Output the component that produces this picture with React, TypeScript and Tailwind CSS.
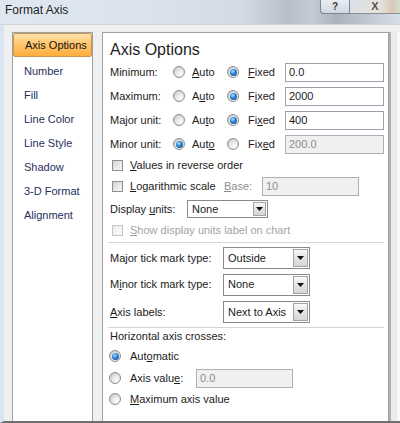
import React from "react";

function Radio({ checked = false }: { checked?: boolean }) {
  return (
    <span className="relative flex w-[12px] h-[12px] shrink-0 items-center justify-center rounded-full border border-[#8e8e8e] bg-[radial-gradient(circle_at_65%_70%,#ffffff_0%,#e6e6e6_45%,#bdbdbd_100%)]">
      {checked && (
        <span className="block w-[7px] h-[7px] rounded-full bg-[radial-gradient(circle_at_40%_35%,#a8e0ff_0%,#2b7fd0_45%,#0b3f7c_100%)]" />
      )}
    </span>
  );
}

function Check({ disabled = false }: { disabled?: boolean }) {
  return (
    <span
      className={
        disabled
          ? "block w-[11px] h-[11px] shrink-0 border border-[#c4c4c4] bg-[linear-gradient(135deg,#ececec,#fbfbfb)]"
          : "block w-[11px] h-[11px] shrink-0 border border-[#8e8f8f] bg-[linear-gradient(135deg,#d4d4d4,#f8f8f8)]"
      }
    />
  );
}

function Input({ value, disabled = false, w }: { value: string; disabled?: boolean; w: string }) {
  return (
    <div
      className={
        (disabled
          ? "bg-[#f0f0f0] text-[#8d8d8d] border-[#a9b0b7] "
          : "bg-white text-[#1b1b1b] border-[#9aa1a8] ") +
        "h-[19px] border flex items-center pl-[3px] text-[11px] leading-none " +
        w
      }
    >
      {value}
    </div>
  );
}

function Arrow({ small = false }: { small?: boolean }) {
  return (
    <span
      className={
        (small ? "w-[13px] h-[14px] " : "w-[15px] h-[18px] ") +
        "flex items-center justify-center border border-[#a3a3a3] bg-[linear-gradient(#f9f9f9,#e3e3e3_50%,#d6d6d6)]"
      }
    >
      <svg width="7" height="4" viewBox="0 0 7 4">
        <path d="M0 0 H7 L3.5 4 Z" fill="#111" />
      </svg>
    </span>
  );
}

function Select({ value, w, h, small = false }: { value: string; w: string; h: string; small?: boolean }) {
  return (
    <div className={"flex items-center border border-[#8a8a8a] bg-white pl-[4px] pr-[1px] " + w + " " + h}>
      <span className="flex-1 text-[11px] text-[#1b1b1b] whitespace-nowrap">{value}</span>
      <Arrow small={small} />
    </div>
  );
}

const navItems = ["Number", "Fill", "Line Color", "Line Style", "Shadow", "3-D Format", "Alignment"];

export default function App() {
  return (
    <div className="w-[400px] h-[423px] overflow-hidden flex flex-col font-['Liberation_Sans',Arial,sans-serif] text-[11px] text-[#1b1b1b] bg-[#f0f0f0]">
      {/* Title bar */}
      <div className="h-[25px] flex items-start bg-[linear-gradient(90deg,#dfe8f1_0%,#dbe4ee_35%,#d3dce6_60%,#b7c0ca_72%,#c2cbd4_78%,#aab3bd_84%,#d6dee6_100%)] border-b border-[#cfd6de]">
        <div className="flex-1 pl-[5px] pt-[3px] text-[12px] leading-[14px] text-[#1e1e1e]">Format Axis</div>
        <div className="flex">
          <div className="w-[30px] h-[14px] flex items-center justify-center border border-t-0 border-[#7d8894] rounded-bl-[4px] bg-[linear-gradient(#e9eef3,#cfd8e1)] text-[10px] font-bold text-[#3a3a3a] leading-none">
            ?
          </div>
          <div className="w-[50px] h-[14px] flex items-center justify-center border-b border-[#8a8f95] bg-[linear-gradient(90deg,#d9e0e7,#e8e2dc_60%,#d8c8b8_85%,#cfe0c9)] text-[11px] font-bold text-[#555] leading-none">
            X
          </div>
        </div>
      </div>

      {/* Body */}
      <div className="flex-1 flex border-l-[4px] border-l-[#d9e5f2] border-b-2 border-b-[#6e6e6e] pl-[8px] pt-[7px]">
        {/* Left nav */}
        <div className="w-[81px] border border-b-0 border-[#a0a0a0] bg-white flex flex-col">
          <div className="h-[24px] flex items-center pl-[11px] border border-[#c9964f] rounded-[2px] bg-[linear-gradient(#ffe2ad_0%,#ffc66e_45%,#ffae3d_100%)] text-[#111]">
            Axis Options
          </div>
          <div className="mt-[2px] flex flex-col">
            {navItems.map((n) => (
              <div key={n} className="h-[24px] flex items-center pl-[11px] text-[#1f2f5c]">
                {n}
              </div>
            ))}
          </div>
        </div>

        {/* Right panel */}
        <div className="ml-[9px] w-[287px] border border-b-0 border-[#a0a0a0] bg-white flex flex-col pl-[7px]">
          <div className="h-[27px] pt-[7px] text-[16px] leading-[19px] text-[#1e1e1e]">Axis Options</div>

          {[
            { label: "Minimum:", auto: false, a: ["", "A", "uto"], f: ["", "F", "ixed"], val: "0.0" },
            { label: "Maximum:", auto: false, a: ["A", "u", "to"], f: ["F", "i", "xed"], val: "2000" },
            { label: "Major unit:", auto: false, a: ["Au", "t", "o"], f: ["Fi", "x", "ed"], val: "400" },
            { label: "Minor unit:", auto: true, a: ["Aut", "o", ""], f: ["Fix", "e", "d"], val: "200.0" },
          ].map((r) => (
            <div key={r.label} className="h-[24px] flex items-center">
              <span className="w-[63px] whitespace-nowrap">{r.label}</span>
              <Radio checked={r.auto} />
              <span className="ml-[7px] w-[35px]">
                {r.a[0]}
                <u>{r.a[1]}</u>
                {r.a[2]}
              </span>
              <Radio checked={!r.auto} />
              <span className="ml-[9px] w-[37px]">
                {r.f[0]}
                <u>{r.f[1]}</u>
                {r.f[2]}
              </span>
              <Input value={r.val} disabled={r.auto} w="w-[99px]" />
            </div>
          ))}

          <div className="h-[18px] flex items-center">
            <span className="ml-[2px]">
              <Check />
            </span>
            <span className="ml-[7px]">
              <u>V</u>alues in reverse order
            </span>
          </div>

          <div className="h-[24px] flex items-center">
            <span className="ml-[2px]">
              <Check />
            </span>
            <span className="ml-[7px] w-[94px] whitespace-nowrap">
              <u>L</u>ogarithmic scale
            </span>
            <span className="w-[38px] text-[#8d8d8d]">
              <u>B</u>ase:
            </span>
            <Input value="10" disabled w="w-[97px]" />
          </div>

          <div className="h-[22px] flex items-center">
            <span className="w-[77px] whitespace-nowrap">
              Display <u>u</u>nits:
            </span>
            <Select value="None" w="w-[81px]" h="h-[18px]" small />
          </div>

          <div className="h-[21px] flex items-center text-[#a3a3a3]">
            <span className="ml-[2px]">
              <Check disabled />
            </span>
            <span className="ml-[7px]">
              <u>S</u>how display units label on chart
            </span>
          </div>

          <div className="-ml-[2px] mt-[1px] mb-[2px] w-[276px] h-px bg-[#d5d5d5]" />

          <div className="h-[26px] flex items-center">
            <span className="w-[113px] whitespace-nowrap">Major tick mark type:</span>
            <Select value="Outside" w="w-[87px]" h="h-[22px]" />
          </div>
          <div className="h-[27px] flex items-center">
            <span className="w-[113px] whitespace-nowrap">
              M<u>i</u>nor tick mark type:
            </span>
            <Select value="None" w="w-[87px]" h="h-[22px]" />
          </div>
          <div className="h-[28px] flex items-center">
            <span className="w-[113px] whitespace-nowrap">
              <u>A</u>xis labels:
            </span>
            <Select value="Next to Axis" w="w-[87px]" h="h-[22px]" />
          </div>

          <div className="-ml-[2px] mt-[1px] w-[276px] h-px bg-[#d5d5d5]" />

          <div className="h-[17px] flex items-center">Horizontal axis crosses:</div>
          <div className="h-[22px] flex items-center">
            <span className="-ml-px">
              <Radio checked />
            </span>
            <span className="ml-[9px]">
              Aut<u>o</u>matic
            </span>
          </div>
          <div className="h-[22px] flex items-center">
            <span className="-ml-px">
              <Radio />
            </span>
            <span className="ml-[9px] w-[66px] whitespace-nowrap">
              Axis valu<u>e</u>:
            </span>
            <Input value="0.0" disabled w="w-[97px]" />
          </div>
          <div className="h-[20px] flex items-center">
            <span className="-ml-px">
              <Radio />
            </span>
            <span className="ml-[9px]">
              <u>M</u>aximum axis value
            </span>
          </div>
        </div>

        {/* Right frame strip */}
        <div className="w-[11px] flex">
          <div className="w-[2px] bg-[#b0b0b0]" />
          <div className="w-[6px] bg-[#ececec]" />
          <div className="flex-1 bg-[#f9f9f9]" />
        </div>
      </div>
    </div>
  );
}
